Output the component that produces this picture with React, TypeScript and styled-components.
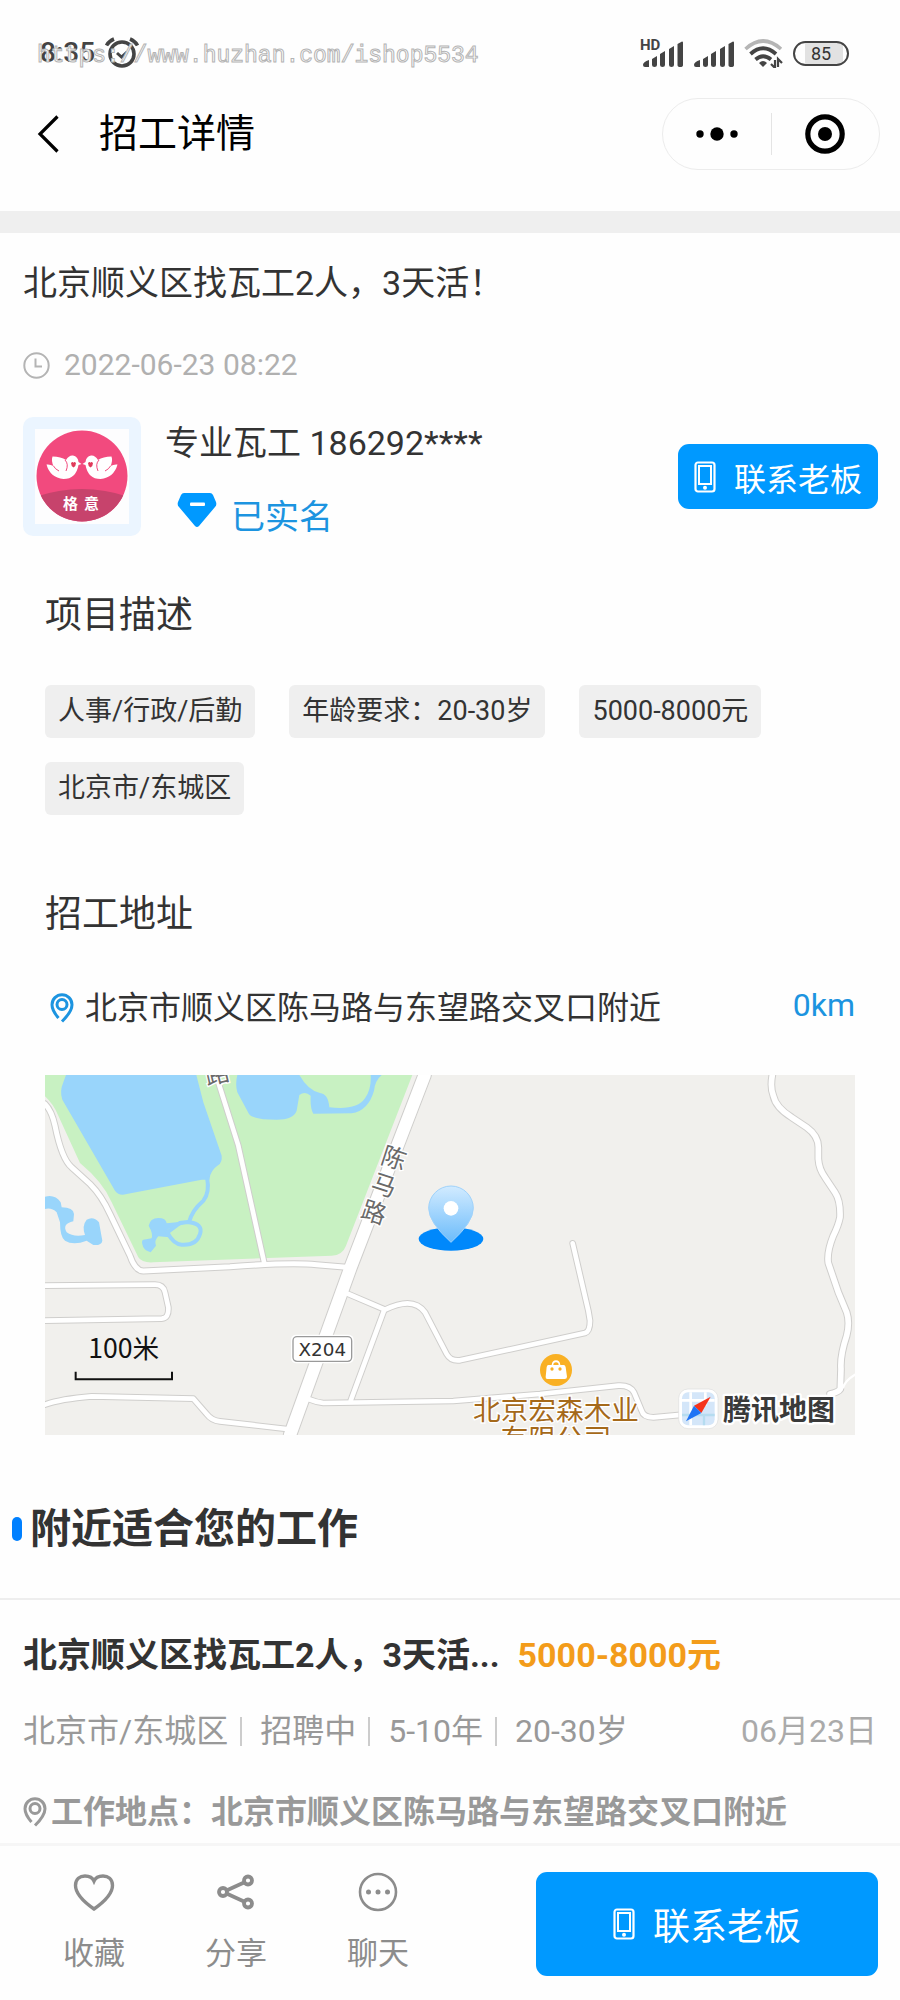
import styled, { createGlobalStyle } from "styled-components";

const GlobalStyle = createGlobalStyle`
  * {
    box-sizing: border-box;
  }
  body {
    margin: 0;
    background: #fefefe;
    color: #333333;
    font-family: Roboto, "Noto Sans CJK SC", sans-serif;
  }
  h1, h2, h3, p, ul {
    margin: 0;
    padding: 0;
    font-weight: 400;
  }
  button {
    font-family: inherit;
    padding: 0;
    border: none;
    background: none;
    cursor: pointer;
  }
  svg {
    display: block;
    flex-shrink: 0;
  }
`;

const Page = styled.div`
  display: flex;
  flex-direction: column;
  min-height: 100vh;
`;

const StatusBar = styled.div`
  position: relative;
  display: flex;
  align-items: center;
  justify-content: space-between;
  height: 80px;
  padding: 26px 51px 0 40px;
`;

const StatusGroup = styled.div`
  display: flex;
  align-items: center;
  gap: 10px;
`;

const Time = styled.span`
  font-size: 28px;
  line-height: 32px;
  font-weight: 500;
  color: #444444;
`;

const Watermark = styled.span`
  position: absolute;
  left: 37px;
  top: 42px;
  font-family: "Liberation Mono", monospace;
  font-size: 23px;
  line-height: 28px;
  color: #ffffff;
  -webkit-text-stroke: 1px #b4b4b4;
`;

const Battery = styled.span`
  display: flex;
  align-items: center;
  justify-content: center;
  width: 56px;
  height: 25px;
  border: 2px solid #444444;
  border-radius: 13px;
  background: linear-gradient(90deg, transparent 10px, #e2e2e2 10px, #e2e2e2 48px, transparent 48px);
  font-size: 18px;
  line-height: 21px;
  color: #333333;
`;

const NavBar = styled.header`
  display: flex;
  align-items: center;
  height: 131px;
  padding: 0 20px 23px 37px;
`;

const BackButton = styled.button`
  width: 62px;
`;

const NavTitle = styled.h1`
  flex: 1;
  font-size: 39px;
  line-height: 56px;
  color: #000000;
`;

const Capsule = styled.div`
  display: flex;
  align-items: center;
  width: 218px;
  height: 72px;
  border: 1px solid #ececec;
  border-radius: 36px;
`;

const CapsuleButton = styled.button`
  display: flex;
  flex: 1;
  align-items: center;
  justify-content: center;
  height: 42px;

  & + & {
    border-left: 1px solid #e4e4e4;
  }
`;

const Band = styled.div`
  height: 22px;
  background: #efefef;
`;

const Summary = styled.section`
  padding: 25px 22px 0 23px;
`;

const Headline = styled.h2`
  font-size: 34px;
  line-height: 50px;
`;

const Published = styled.p`
  display: flex;
  align-items: center;
  gap: 14px;
  margin-top: 37px;
  font-size: 30px;
  line-height: 40px;
  color: #b0b0b0;
`;

const Poster = styled.div`
  display: flex;
  align-items: center;
  margin-top: 26px;
`;

const Avatar = styled.div`
  padding: 12px;
  border-radius: 10px;
  background: #ebf5ff;
`;

const PosterInfo = styled.div`
  flex: 1;
  padding: 7px 0 0 24px;
`;

const PosterName = styled.p`
  font-size: 34px;
  line-height: 50px;
`;

const Verified = styled.p`
  display: flex;
  align-items: flex-start;
  gap: 14px;
  margin-top: 24px;
  padding-left: 12px;
  font-size: 34px;
  line-height: 50px;
  color: #1c94e0;
`;

const ContactButton = styled.button<{ $large?: boolean }>`
  display: flex;
  align-items: center;
  justify-content: center;
  gap: 18px;
  width: ${({ $large }) => ($large ? "40%" : "200px")};
  height: ${({ $large }) => ($large ? 104 : 65)}px;
  border-radius: 11px;
  background: #0099ff;
  color: #ffffff;
  font-size: ${({ $large }) => ($large ? 37 : 32)}px;
`;

const Details = styled.section`
  padding: 0 45px;
`;

const SectionTitle = styled.h2`
  padding-top: 47px;
  font-size: 37px;
  line-height: 54px;
`;

const Tags = styled.ul`
  display: flex;
  flex-wrap: wrap;
  gap: 24px 34px;
  margin: 42px 0 26px;
  list-style: none;
`;

const Tag = styled.li`
  padding: 0 13px;
  border-radius: 6px;
  background: #efefef;
  font-size: 27px;
  line-height: 53px;
`;

const Address = styled.p`
  display: flex;
  align-items: center;
  gap: 11px;
  margin: 41px 0 42px;
  padding-left: 5px;
  font-size: 32px;
  line-height: 50px;
`;

const Distance = styled.span`
  align-self: flex-start;
  margin-left: auto;
  line-height: 44px;
  color: #1c94e0;
`;

const MapView = styled.svg`
  width: 100%;
  height: auto;
`;

const NearbyTitle = styled.h2`
  display: flex;
  align-items: center;
  gap: 8px;
  padding: 63px 12px 38px;
  border-bottom: 2px solid #eeeeee;
  font-size: 41px;
  font-weight: 700;
  line-height: 62px;

  &::before {
    content: "";
    width: 10px;
    height: 24px;
    border-radius: 5px;
    background: #0080ff;
  }
`;

const JobCard = styled.article`
  flex: 1;
  padding: 30px 23px 0;
`;

const JobTitle = styled.h3`
  display: flex;
  gap: 18px;
  font-size: 34px;
  font-weight: 700;
  line-height: 50px;
`;

const Salary = styled.span`
  color: #f39c1a;
`;

const JobMeta = styled.div`
  display: flex;
  align-items: center;
  margin-top: 27px;
  font-size: 32px;
  line-height: 48px;
  color: #999999;
`;

const MetaItem = styled.span`
  display: flex;
  align-items: center;

  & + &::before {
    content: "";
    width: 2px;
    height: 29px;
    margin: 0 18px 0 12px;
    background: #cccccc;
  }
`;

const JobDate = styled.time`
  margin-left: auto;
  color: #aaaaaa;
`;

const JobPlace = styled.p`
  display: flex;
  align-items: center;
  gap: 4px;
  margin-top: 33px;
  font-size: 32px;
  font-weight: 700;
  line-height: 48px;
  color: #999999;
`;

const BottomBar = styled.footer`
  display: flex;
  justify-content: space-between;
  height: 157px;
  padding: 26px 22px 24px 23px;
  border-top: 3px solid #f6f6f6;
`;

const Actions = styled.div`
  display: flex;
`;

const Action = styled.button`
  display: flex;
  flex-direction: column;
  align-items: center;
  gap: 19px;
  width: 142px;
  font-size: 31px;
  line-height: 46px;
  color: #8c8c8c;
`;

const AlarmIcon = () => (
  <svg width="34" height="32" viewBox="0 0 34 32" fill="none" stroke="#444444">
    <circle cx="17" cy="17" r="12" strokeWidth="3.600" />
    <path d="M12 16l4.500 4 5.500-5" strokeWidth="3" />
    <path d="M1.500 8.500Q4 4 9 2M25 2q5 2 7.500 6.500" strokeWidth="3.600" />
  </svg>
);

const SignalIcon = ({ hd }: { hd?: boolean }) => (
  <svg width="41" height="30" viewBox="0 0 41 30" fill="#444444" overflow="visible">
    <path d="M1 27q0-3 6-5v7H3q-2 0-2-2zM10 21l5-3v9q0 2-2.500 2T10 27zM18 16l5-3v14q0 2-2.500 2T18 27zM27 11l5-3v19q0 2-2.500 2T27 27zM35.500 6L40 3.500q1 0 1 1V27q0 2-2.750 2t-2.750-2z" />
    {hd && (
      <text x="-2" y="12" fontSize="15" fontWeight="700">
        HD
      </text>
    )}
  </svg>
);

const WifiIcon = () => (
  <svg width="39" height="30" viewBox="0 0 39 30" fill="none" stroke="#444444">
    <path d="M1.500 11Q19 -5 37 11" stroke="#b5b5b5" strokeWidth="3.600" />
    <path d="M6.500 16Q19 4.500 32 16M11.500 21.500Q19 15 27 21.500" strokeWidth="3.800" />
    <path d="M15 25q4-4 8 0l-4 4z" fill="#444444" stroke="none" />
    <path d="M31 22v8l-4-4M34 29v-8l4 4" strokeWidth="2.200" />
  </svg>
);

const PhoneIcon = ({ size }: { size: number }) => (
  <svg width={(size * 11) / 16} height={size} viewBox="0 0 22 32" fill="none" stroke="#ffffff" strokeWidth="2.200">
    <rect x="1.500" y="1.500" width="19" height="29" rx="2.500" />
    <rect x="5" y="5" width="12" height="18" strokeWidth="2" />
    <circle cx="11" cy="26.800" r="2" fill="#ffffff" stroke="none" />
  </svg>
);

const PinIcon = ({ color }: { color: string }) => (
  <svg width="24" height="31" viewBox="0 0 24 31" fill="none" stroke={color} strokeWidth="3">
    <path d="M8.500 25Q2 17.500 2 11.700a10 10 0 0 1 20 0Q22 18.500 12 28.500" />
    <circle cx="12" cy="11.500" r="5" />
  </svg>
);

const Dove = () => (
  <>
    <path
      d="M31 31Q34 26 38 26.500 43 27.500 43.500 33L46.500 35 43.500 36Q41 50 28.500 50 15 48.500 11.500 35.500 15 35 18.500 37 16 32 17.500 27.500 26 27.500 31 31z"
      fill="#ffffff"
    />
    <path d="M18.500 37Q20 40 24 42M30 31Q34 35 31 42" fill="none" stroke="#f24a7e" />
    <path d="M36 34q2-2 2.500 0 .500-2 2.500 0 0 3-2.500 4.500Q36 37 36 34z" fill="#e03a5a" />
  </>
);

const AvatarArt = () => (
  <svg width="94" height="95" viewBox="0 0 94 95">
    <rect width="94" height="95" fill="#fdfdfe" />
    <clipPath id="disc">
      <circle cx="47" cy="47" r="45.500" />
    </clipPath>
    <g clipPath="url(#disc)">
      <rect width="94" height="95" fill="#f24a7e" />
      <path d="M0 68Q47 52 94 68v28H0z" fill="#c7436c" />
    </g>
    <Dove />
    <g transform="translate(94 0) scale(-1 1)">
      <Dove />
    </g>
    <text x="28" y="80" fontSize="15" fontWeight="700" fill="#ffffff">
      格
    </text>
    <text x="49" y="80" fontSize="15" fontWeight="700" fill="#ffffff">
      意
    </text>
  </svg>
);

const roads = [
  { width: 15, d: "M45 135Q65 155 75 200Q95 300 125 325L180 375Q215 410 240 465L300 590Q315 635 340 636L600 623Q780 610 860 617L950 625" },
  { width: 14, d: "M565 70L625 260L702 608" },
  { width: 14, d: "M45 680L375 677Q400 677 405 700L415 745Q417 778 395 779L45 785" },
  { width: 14, d: "M45 1037Q90 1020 185 1012L490 1019L530 1065Q545 1085 570 1087L770 1110" },
  { width: 14, d: "M955 705L1065 752Q1150 710 1185 760L1250 885Q1262 907 1290 904L1665 822Q1680 817 1680 785L1675 755L1628 553" },
  { width: 14, d: "M1062 755L962 1025" },
  { width: 14, d: "M835 1020Q860 1030 880 1032L1270 1026L1530 1005L1765 980Q1800 978 1812 1000L1835 1055Q1840 1075 1870 1075L1960 1067" },
  { width: 17, d: "M2227 48Q2220 85 2230 110Q2237 145 2285 175L2330 205Q2365 230 2365 265V300Q2367 330 2385 355L2415 400Q2432 425 2430 475Q2425 500 2410 530Q2390 580 2395 612L2425 700L2450 760Q2460 790 2450 830Q2430 890 2433 930L2431 990Q2425 1000 2400 1005" },
  { width: 37, d: "M1184 48L1062 365L962 625L780 1128" },
];

// drawn at three units per css pixel
const LocationMap = () => (
  <MapView viewBox="45 48 2430 1080" role="img" aria-label="地图">
    <defs>
      <linearGradient id="pin" x1="0" y1="0" x2="0" y2="1">
        <stop offset="0" stopColor="#d2ebff" />
        <stop offset="1" stopColor="#6cbcfb" />
      </linearGradient>
    </defs>
    <rect x="45" y="48" width="2430" height="1080" fill="#f1f0ed" />
    <path d="M45 48H1147L948 560Q938 588 905 590L370 610Q335 612 325 595L245 430Q220 370 150 312L85 170Q70 135 45 112z" fill="#c8f1c2" />
    <g fill="#99d5fb">
      <path d="M108 48H499L520 130L575 290Q577 310 565 318Q540 335 538 362L515 362L290 405Q267 412 255 395L97 122Q88 98 100 70z" />
      <path d="M622 48H808Q835 95 870 102Q895 105 898 145Q980 155 1005 118Q1025 90 1022 48H1055Q1035 65 1032 95Q1015 155 965 163L850 164Q840 150 842 110Q825 95 808 108L800 155Q790 182 740 182Q670 182 657 165L622 100Q615 75 622 48z" />
      <path d="M356 500Q360 478 385 477Q408 477 410 493L440 490Q475 485 470 493L415 510Q405 515 418 535L385 532Q372 545 378 560L362 580Q345 575 340 565Q332 545 340 542L365 538Q370 525 356 500z" />
      <path d="M45 413Q75 405 92 430L95 445Q130 445 132 465L130 487Q95 495 110 520Q130 535 165 528Q155 500 170 482Q190 470 207 490L217 545Q215 560 190 558L170 545Q130 560 105 545Q90 535 90 490L80 460Q65 445 45 450z" />
    </g>
    <path d="M531 355Q540 400 520 425Q485 455 477 490Q520 495 510 525Q500 560 455 557Q430 555 412 520L450 492L480 488" fill="none" stroke="#99d5fb" strokeWidth="12" />
    <g fill="none" stroke="#cfcecc" strokeLinecap="round" strokeLinejoin="round">
      {roads.map(({ d, width }) => (
        <path key={d} d={d} strokeWidth={width + 6} />
      ))}
    </g>
    <g fill="none" stroke="#ffffff" strokeLinecap="round" strokeLinejoin="round">
      {roads.map(({ d, width }) => (
        <path key={d} d={d} strokeWidth={width} />
      ))}
      <path d="M2400 1010L2440 985Q2445 965 2475 947" strokeWidth="7" />
    </g>
    <g fill="#6a6a6a" stroke="#ffffff" strokeWidth="8" paintOrder="stroke" fontSize="74" textAnchor="middle">
      <text transform="translate(562 48) rotate(-13)" y="23">路</text>
      <text transform="translate(1092 297) rotate(18)" y="27">陈</text>
      <text transform="translate(1062 378) rotate(18)" y="27">马</text>
      <text transform="translate(1032 460) rotate(18)" y="27">路</text>
    </g>
    <rect x="783" y="827" width="188" height="86" rx="15" fill="#ffffff" />
    <rect x="789" y="833" width="176" height="74" rx="12" fill="#ffffff" stroke="#9a9a9a" strokeWidth="4" />
    <text x="877" y="890" fontSize="55" fontFamily="DejaVu Sans, sans-serif" textAnchor="middle" fill="#333333">X204</text>
    <text x="281" y="896" fontSize="80" fontFamily="Noto Sans CJK SC, sans-serif" textAnchor="middle" fill="#111111">100米</text>
    <path d="M137 938V961H426V938" fill="none" stroke="#111111" strokeWidth="6" />
    <ellipse cx="1263" cy="540" rx="97" ry="35" fill="#0088fb" />
    <path d="M1263 550Q1196 490 1196 448a67 67 0 0 1 134 0Q1330 490 1263 550z" fill="url(#pin)" stroke="#9fd2fb" strokeWidth="3" strokeLinejoin="round" />
    <circle cx="1263" cy="448" r="22" fill="#ffffff" />
    <circle cx="1578" cy="933" r="48" fill="#f9b023" />
    <path d="M1555 918H1565Q1566 904 1578 904T1591 918H1601Q1606 918 1607 925L1611 953Q1611 960 1604 960H1552Q1546 960 1547 953L1550 924Q1551 918 1555 918z" fill="#ffffff" />
    <path d="M1570 918Q1570 910 1578 910T1586 918z" fill="#f9b023" />
    <circle cx="1566" cy="930" r="5" fill="#f9b023" />
    <circle cx="1590" cy="930" r="5" fill="#f9b023" />
    <g fill="#a5691a" stroke="#ffffff" strokeWidth="8" paintOrder="stroke" fontSize="83" textAnchor="middle">
      <text x="1578" y="1082">北京宏森木业</text>
      <text x="1578" y="1169">有限公司</text>
    </g>
    <rect x="1946" y="990" width="118" height="119" rx="28" fill="#ffffff" stroke="#dddddd" strokeWidth="2" />
    <rect x="1956" y="1000" width="98" height="99" rx="18" fill="#d4e6f9" />
    <path d="M1956 1024H2054M1982 1000V1099M2026 1000V1040" fill="none" stroke="#ffffff" strokeWidth="8" />
    <path d="M1956 1068H2054M2022 1068V1099" fill="none" stroke="#b5dcf0" strokeWidth="7" />
    <path d="M2042 1013L1992 1040L2014 1062z" fill="#f5341c" />
    <path d="M1968 1087L1992 1040L2014 1062z" fill="#1f74f5" />
    <text x="2247" y="1082" fontSize="84" fontWeight="700" textAnchor="middle" fill="#3a3a3a" stroke="#ffffff" strokeWidth="14" strokeLinejoin="round" paintOrder="stroke">腾讯地图</text>
  </MapView>
);

const tags = ["人事/行政/后勤", "年龄要求：20-30岁", "5000-8000元", "北京市/东城区"];
const meta = ["北京市/东城区", "招聘中", "5-10年", "20-30岁"];

function App() {
  return (
    <Page>
      <GlobalStyle />
      <StatusBar>
        <StatusGroup>
          <Time>8:35</Time>
          <AlarmIcon />
        </StatusGroup>
        <StatusGroup>
          <SignalIcon hd />
          <SignalIcon />
          <WifiIcon />
          <Battery>85</Battery>
        </StatusGroup>
        <Watermark>https://www.huzhan.com/ishop5534</Watermark>
      </StatusBar>

      <NavBar>
        <BackButton aria-label="返回">
          <svg width="22" height="38" viewBox="0 0 22 38" fill="none" stroke="#000000" strokeWidth="3.200">
            <path d="M20.500 1.500L3 19l17.500 17.500" />
          </svg>
        </BackButton>
        <NavTitle>招工详情</NavTitle>
        <Capsule>
          <CapsuleButton aria-label="更多">
            <svg width="42" height="14" viewBox="0 0 42 14" fill="#000000">
              <circle cx="4" cy="7" r="3.700" />
              <circle cx="21" cy="7" r="6.700" />
              <circle cx="38" cy="7" r="3.700" />
            </svg>
          </CapsuleButton>
          <CapsuleButton aria-label="关闭">
            <svg width="40" height="40" viewBox="0 0 40 40">
              <circle cx="20" cy="20" r="17.200" fill="none" stroke="#000000" strokeWidth="5.200" />
              <circle cx="20" cy="20" r="7" />
            </svg>
          </CapsuleButton>
        </Capsule>
      </NavBar>
      <Band />

      <Summary>
        <Headline>北京顺义区找瓦工2人，3天活！</Headline>
        <Published>
          <svg width="27" height="27" viewBox="0 0 27 27" fill="none" stroke="#b4b4b4" strokeWidth="2">
            <circle cx="13.500" cy="13.500" r="12.200" />
            <path d="M12.500 6.500v8h6.500" />
          </svg>
          2022-06-23 08:22
        </Published>
        <Poster>
          <Avatar>
            <AvatarArt />
          </Avatar>
          <PosterInfo>
            <PosterName>专业瓦工 186292****</PosterName>
            <Verified>
              <svg width="40" height="36" viewBox="0 0 40 36">
                <path d="M7 1H33Q35 1 36 3L39 10Q40 13 38 15L22 34Q20 36 18 34L2 15Q0 13 1 10L4 3Q5 1 7 1z" fill="#0099ff" />
                <rect x="13" y="10.500" width="15" height="3.400" rx="1" fill="#ffffff" />
              </svg>
              已实名
            </Verified>
          </PosterInfo>
          <ContactButton>
            <PhoneIcon size={32} />
            联系老板
          </ContactButton>
        </Poster>
      </Summary>

      <Details>
        <SectionTitle>项目描述</SectionTitle>
        <Tags>
          {tags.map((tag) => (
            <Tag key={tag}>{tag}</Tag>
          ))}
        </Tags>
        <SectionTitle>招工地址</SectionTitle>
        <Address>
          <PinIcon color="#1c94e0" />
          北京市顺义区陈马路与东望路交叉口附近
          <Distance>0km</Distance>
        </Address>
        <LocationMap />
      </Details>

      <NearbyTitle>附近适合您的工作</NearbyTitle>
      <JobCard>
        <JobTitle>
          北京顺义区找瓦工2人，3天活...
          <Salary>5000-8000元</Salary>
        </JobTitle>
        <JobMeta>
          {meta.map((item) => (
            <MetaItem key={item}>{item}</MetaItem>
          ))}
          <JobDate>06月23日</JobDate>
        </JobMeta>
        <JobPlace>
          <PinIcon color="#999999" />
          工作地点：北京市顺义区陈马路与东望路交叉口附近
        </JobPlace>
      </JobCard>

      <BottomBar>
        <Actions>
          <Action>
            <svg width="42" height="40" viewBox="0 0 42 40" fill="none" stroke="#8c8c8c" strokeWidth="3.400">
              <path d="M21 37Q2.500 24 2.500 13.500C2.500 7 7 4 12 4 16 4 19.500 5.500 21 9 22.500 5.500 26 4 30 4 35 4 39.500 7 39.500 13.500Q39.500 24 21 37z" />
            </svg>
            收藏
          </Action>
          <Action>
            <svg width="40" height="40" viewBox="0 0 40 40" fill="none" stroke="#8c8c8c" strokeWidth="3.800">
              <circle cx="7" cy="20" r="4" />
              <circle cx="32" cy="8.500" r="4" />
              <circle cx="32" cy="31.500" r="4" />
              <path d="M10.500 18.500L28 10.500M10.500 21.500L28 29.500" />
            </svg>
            分享
          </Action>
          <Action>
            <svg width="40" height="40" viewBox="0 0 40 40" fill="none" stroke="#8c8c8c" strokeWidth="2.600">
              <circle cx="20" cy="20" r="18" />
              <g fill="#8c8c8c" stroke="none">
                <circle cx="10.500" cy="20" r="2.500" />
                <circle cx="20" cy="20" r="2.500" />
                <circle cx="29.500" cy="20" r="2.500" />
              </g>
            </svg>
            聊天
          </Action>
        </Actions>
        <ContactButton $large>
          <PhoneIcon size={32} />
          联系老板
        </ContactButton>
      </BottomBar>
    </Page>
  );
}

export default App;
